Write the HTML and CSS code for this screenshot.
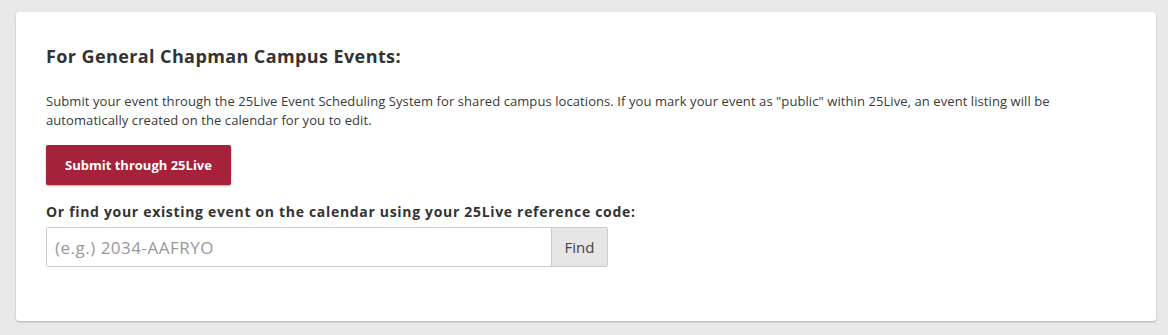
FILE: index.html
```html
<!DOCTYPE html>
<html lang="en">
  <head>
    <meta charset="UTF-8" />
    <title>Submit an Event</title>
    <link rel="stylesheet" href="styles.css">
  </head>
  <body>
    <main class="page">
      <section class="card">
        <h2 class="card-title">For General Chapman Campus Events:</h2>
        <p class="card-text">Submit your event through the 25Live Event Scheduling System for shared campus locations. If you mark your event as "public" within 25Live, an event listing will be automatically created on the calendar for you to edit.</p>
        <a class="btn-submit" href="#">Submit through 25Live</a>
        <form class="find-form">
          <label class="find-label" for="refcode">Or find your existing event on the calendar using your 25Live reference code:</label>
          <div class="input-group">
            <input id="refcode" class="find-input" type="text" placeholder="(e.g.) 2034-AAFRYO" />
            <button class="find-btn" type="button">Find</button>
          </div>
        </form>
      </section>
    </main>
  </body>
</html>
```

FILE: styles.css
```css
* {
  box-sizing: border-box;
  margin: 0;
  padding: 0;
}

body {
  background-color: #e9e9e9;
  font-family: "Open Sans", "Liberation Sans", sans-serif;
  color: #333;
}

.page {
  padding: 12px 12px 14px 16px;
}

.card {
  background: #fff;
  border-radius: 3px;
  box-shadow: 0 1px 2px rgba(0, 0, 0, 0.25);
  padding: 33px 30px 54px 30px;
  height: 309px;
}

.card-title {
  font-size: 18px;
  font-weight: 700;
  color: #333;
  line-height: 22px;
  letter-spacing: 0.4px;
}

.card-text {
  margin-top: 25px;
  font-size: 13px;
  line-height: 19px;
  color: #3a3a3a;
  letter-spacing: 0.08px;
  max-width: 1060px;
}

.btn-submit {
  display: block;
  margin-top: 15px;
  background: #a6213a;
  color: #fff;
  font-weight: 700;
  font-size: 13px;
  text-decoration: none;
  text-align: center;
  height: 40px;
  line-height: 40px;
  width: 185px;
  border-radius: 2px;
  box-shadow: 0 1px 2px rgba(0, 0, 0, 0.35);
}

.find-form {
  margin-top: 18px;
}

.find-label {
  display: block;
  font-size: 14px;
  font-weight: 700;
  color: #333;
  line-height: 18px;
  letter-spacing: 0.68px;
}

.input-group {
  display: flex;
  width: 562px;
  height: 40px;
  margin-top: 6px;
  border: 1px solid #ccc;
  border-radius: 2px;
}

.find-input {
  flex: 1;
  border: none;
  padding: 0 8px;
  font-family: inherit;
  font-size: 17px;
  color: #333;
  letter-spacing: 0.5px;
}

.find-input::placeholder {
  color: #999;
}

.find-btn {
  width: 56px;
  border: none;
  border-left: 1px solid #ccc;
  background: #e6e6e6;
  font-family: inherit;
  font-size: 15px;
  color: #444;
}
```
